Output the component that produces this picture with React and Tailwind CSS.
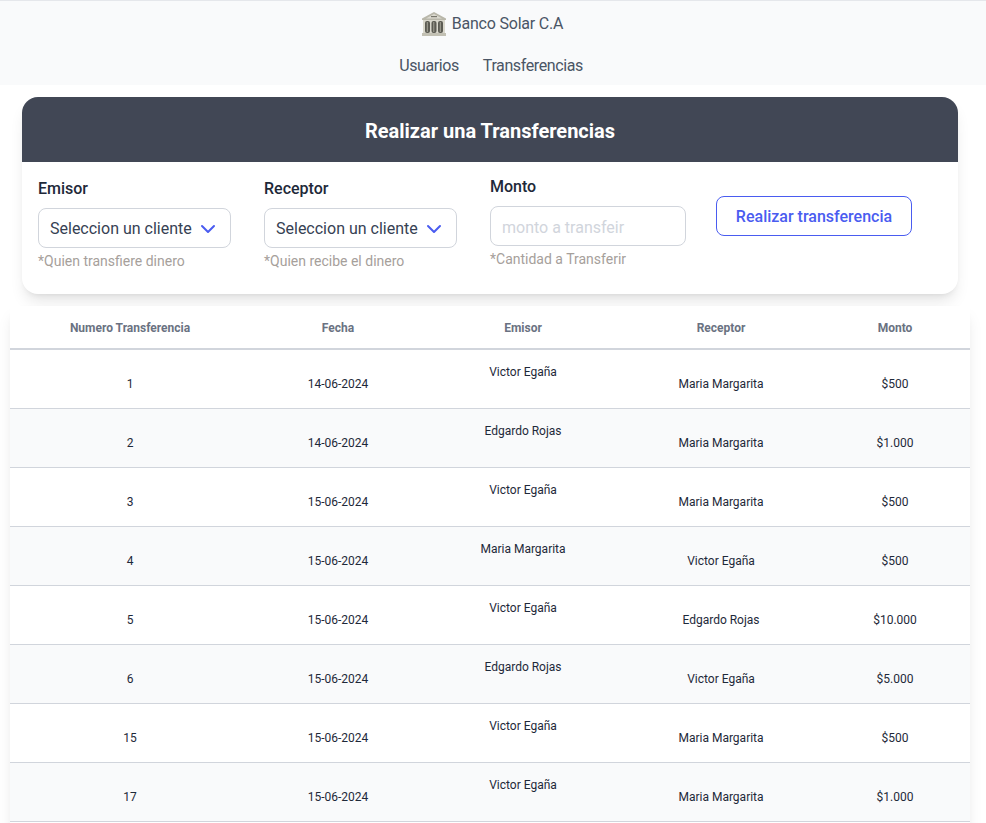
const rows = [
  { id: 1, fecha: "14-06-2024", emisor: "Victor Egaña", receptor: "Maria Margarita", monto: "$500" },
  { id: 2, fecha: "14-06-2024", emisor: "Edgardo Rojas", receptor: "Maria Margarita", monto: "$1.000" },
  { id: 3, fecha: "15-06-2024", emisor: "Victor Egaña", receptor: "Maria Margarita", monto: "$500" },
  { id: 4, fecha: "15-06-2024", emisor: "Maria Margarita", receptor: "Victor Egaña", monto: "$500" },
  { id: 5, fecha: "15-06-2024", emisor: "Victor Egaña", receptor: "Edgardo Rojas", monto: "$10.000" },
  { id: 6, fecha: "15-06-2024", emisor: "Edgardo Rojas", receptor: "Victor Egaña", monto: "$5.000" },
  { id: 15, fecha: "15-06-2024", emisor: "Victor Egaña", receptor: "Maria Margarita", monto: "$500" },
  { id: 17, fecha: "15-06-2024", emisor: "Victor Egaña", receptor: "Maria Margarita", monto: "$1.000" },
  { id: "", fecha: "", emisor: "", receptor: "", monto: "" },
];

function BankIcon() {
  return (
    <svg width="26" height="26" viewBox="0 0 26 26" className="shrink-0">
      <path d="M13 1 L25 7.5 L25 9 L1 9 L1 7.5 Z" fill="#b9b7aa" />
      <path d="M13 3 L21 7.5 L5 7.5 Z" fill="#dcdad0" />
      <rect x="10" y="5" width="6" height="1.2" fill="#77766c" />
      <rect x="2" y="9" width="22" height="14" fill="#d9d7cc" />
      <rect x="4" y="10" width="5" height="12" rx="2" fill="#5c5b53" />
      <rect x="10.5" y="10" width="5" height="12" rx="2" fill="#5c5b53" />
      <rect x="17" y="10" width="5" height="12" rx="2" fill="#5c5b53" />
      <rect x="5.8" y="11" width="1" height="10" fill="#a5a498" />
      <rect x="12.3" y="11" width="1" height="10" fill="#a5a498" />
      <rect x="18.8" y="11" width="1" height="10" fill="#a5a498" />
      <rect x="1" y="22" width="24" height="3" fill="#c2c0b3" />
    </svg>
  );
}

function ClienteSelect({ label, help }) {
  return (
    <div className="w-[193px] mt-[2px] shrink-0">
      <label className="block text-base font-medium leading-6 text-gray-800 h-[31px]">{label}</label>
      <div className="h-10 flex items-center justify-between pl-[11px] pr-[14px] pt-[2px] border border-gray-300 rounded-lg bg-white text-base text-gray-700">
        <span>Seleccion un cliente</span>
        <svg width="16" height="16" viewBox="0 0 16 16" fill="none" stroke="#4a5cf0" strokeWidth="2" strokeLinecap="round" strokeLinejoin="round">
          <path d="M2 5 L8 11 L14 5" />
        </svg>
      </div>
      <p className="mt-[3px] text-sm leading-5 text-stone-400">{help}</p>
    </div>
  );
}

export default function App() {
  return (
    <div className="h-screen overflow-hidden bg-white" style={{ fontFamily: 'Roboto, sans-serif' }}>
      <nav className="h-[85px] bg-gray-50 border-t border-gray-200">
        <div className="h-[46px] flex items-center justify-center gap-[5px] pr-[2px] text-base text-gray-600">
          <BankIcon />
          <span className="tracking-[-0.2px]">Banco Solar C.A</span>
        </div>
        <div className="flex justify-center gap-6 pt-[7px] pr-1 text-base leading-6 tracking-[-0.4px] text-gray-600">
          <a>Usuarios</a>
          <a>Transferencias</a>
        </div>
      </nav>

      <section className="ml-[22px] mr-[28px] mt-3 h-[197px] rounded-2xl bg-white shadow-lg">
        <h1 className="h-[65px] flex items-center justify-center pt-[2px] rounded-t-2xl bg-[#414755] text-xl font-bold text-white">
          Realizar una Transferencias
        </h1>
        <div className="flex items-start pl-4 pt-[13px]">
          <ClienteSelect label="Emisor" help="*Quien transfiere dinero" />
          <div className="w-[33px] shrink-0" />
          <ClienteSelect label="Receptor" help="*Quien recibe el dinero" />
          <div className="w-[33px] shrink-0" />
          <div className="w-[196px] shrink-0">
            <label className="block text-base font-medium leading-6 text-gray-800 h-[31px]">Monto</label>
            <input
              placeholder="monto a transfeir"
              className="block w-full h-10 pl-[11px] pr-3 pt-[2px] border border-gray-300 rounded-lg text-base outline-none placeholder:text-gray-300"
            />
            <p className="mt-[3px] text-sm leading-5 text-stone-400">*Cantidad a Transferir</p>
          </div>
          <button className="ml-[30px] mt-[21px] w-[196px] h-10 pt-[2px] rounded-lg border border-[#4a5cf0] bg-white text-base font-medium text-[#4a5cf0]">
            Realizar transferencia
          </button>
        </div>
      </section>

      <div className="ml-[10px] mr-4 mt-3 bg-white shadow-lg">
        <table className="w-full table-fixed border-collapse text-xs text-gray-800">
          <colgroup>
            <col className="w-[240px]" />
            <col className="w-[176px]" />
            <col className="w-[194px]" />
            <col className="w-[202px]" />
            <col />
          </colgroup>
          <thead>
            <tr className="h-[43px] border-b-2 border-gray-300 text-gray-500">
              <th className="pt-[2px] font-bold">Numero Transferencia</th>
              <th className="pt-[2px] font-bold">Fecha</th>
              <th className="pt-[2px] font-bold">Emisor</th>
              <th className="pt-[2px] font-bold">Receptor</th>
              <th className="pt-[2px] pr-[2px] font-bold">Monto</th>
            </tr>
          </thead>
          <tbody>
            {rows.map((r, i) => (
              <tr key={i} className={`h-[59px] border-b border-gray-300 ${i % 2 ? "bg-gray-50" : "bg-white"}`}>
                <td className="text-center align-bottom pb-4 leading-4">{r.id}</td>
                <td className="text-center align-bottom pb-4 leading-4">{r.fecha}</td>
                <td className="text-center align-top pt-[14px] leading-4">{r.emisor}</td>
                <td className="text-center align-bottom pb-4 leading-4">{r.receptor}</td>
                <td className="text-center align-bottom pb-4 pr-[2px] leading-4">{r.monto}</td>
              </tr>
            ))}
          </tbody>
        </table>
      </div>
    </div>
  );
}
